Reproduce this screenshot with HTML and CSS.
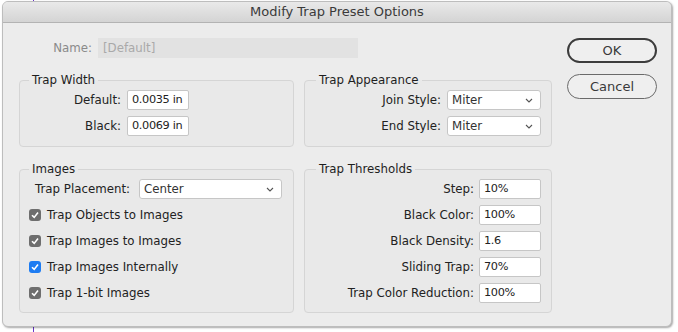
FILE: index.html
```html
<!DOCTYPE html>
<html lang="en">
<head>
    <meta charset="UTF-8">
    <title>Modify Trap Preset Options</title>
    <link rel="stylesheet" href="styles.css">
</head>
<body>
    <div class="dialog">
        <div class="titlebar">Modify Trap Preset Options</div>
        <div class="content">
            <div class="main">
                <div class="name-row">
                    <span class="name-label">Name:</span>
                    <div class="name-field">[Default]</div>
                </div>

                <div class="groups">
                    <fieldset class="group group-top">
                        <legend>Trap Width</legend>
                        <div class="form form-width">
                            <label>Default:</label>
                            <div class="field">0.0035 in</div>
                            <label>Black:</label>
                            <div class="field">0.0069 in</div>
                        </div>
                    </fieldset>

                    <fieldset class="group group-top group-right">
                        <legend>Trap Appearance</legend>
                        <div class="form form-appearance">
                            <label>Join Style:</label>
                            <div class="select">Miter<svg class="chevron" viewBox="0 0 8 5"><path d="M1 1 L4 4 L7 1"/></svg></div>
                            <label>End Style:</label>
                            <div class="select">Miter<svg class="chevron" viewBox="0 0 8 5"><path d="M1 1 L4 4 L7 1"/></svg></div>
                        </div>
                    </fieldset>

                    <fieldset class="group group-bottom">
                        <legend>Images</legend>
                        <div class="images">
                            <div class="placement">
                                <label>Trap Placement:</label>
                                <div class="select">Center<svg class="chevron" viewBox="0 0 8 5"><path d="M1 1 L4 4 L7 1"/></svg></div>
                            </div>
                            <div class="check-row"><span class="checkbox"><svg viewBox="0 0 12 12"><path d="M3 6.2 L5.2 8.4 L9 3.6"/></svg></span>Trap Objects to Images</div>
                            <div class="check-row"><span class="checkbox"><svg viewBox="0 0 12 12"><path d="M3 6.2 L5.2 8.4 L9 3.6"/></svg></span>Trap Images to Images</div>
                            <div class="check-row"><span class="checkbox checkbox-blue"><svg viewBox="0 0 12 12"><path d="M3 6.2 L5.2 8.4 L9 3.6"/></svg></span>Trap Images Internally</div>
                            <div class="check-row"><span class="checkbox"><svg viewBox="0 0 12 12"><path d="M3 6.2 L5.2 8.4 L9 3.6"/></svg></span>Trap 1-bit Images</div>
                        </div>
                    </fieldset>

                    <fieldset class="group group-bottom group-right">
                        <legend>Trap Thresholds</legend>
                        <div class="form form-thresholds">
                            <label>Step:</label>
                            <div class="field">10%</div>
                            <label>Black Color:</label>
                            <div class="field">100%</div>
                            <label>Black Density:</label>
                            <div class="field">1.6</div>
                            <label>Sliding Trap:</label>
                            <div class="field">70%</div>
                            <label>Trap Color Reduction:</label>
                            <div class="field">100%</div>
                        </div>
                    </fieldset>
                </div>
            </div>

            <div class="buttons">
                <button class="btn btn-default">OK</button>
                <button class="btn">Cancel</button>
            </div>
        </div>
    </div>
</body>
</html>
```

FILE: styles.css
```css
body {
    margin: 0;
    padding-top: 1px;
    height: 331px;
    font-family: "DejaVu Sans", sans-serif;
    font-size: 11.8px;
    color: #222;
    background: linear-gradient(to right, transparent 33px, #6b35c9 33px, #6b35c9 34px, transparent 34px), #fff;
}
.dialog {
    box-sizing: border-box;
    width: 670px;
    height: 326px;
    margin-left: 2px;
    background: #ececec;
    border: 1px solid #bdbdbd;
    border-radius: 6px;
    box-shadow: 1px 1px 2px rgba(0, 0, 0, 0.35);
    overflow: hidden;
}
.titlebar {
    height: 20px;
    line-height: 20px;
    text-align: center;
    font-size: 13px;
    color: #3a3a3a;
    background: linear-gradient(#e9e9e9, #d4d4d4);
    border-bottom: 1px solid #b3b3b3;
}
.content {
    display: flex;
    gap: 15px;
    padding-left: 16px;
}
.main {
    width: 533px;
    padding-top: 15px;
}
.name-row {
    display: flex;
    align-items: center;
    gap: 6px;
    height: 20px;
}
.name-label {
    width: 73px;
    text-align: right;
    color: #8a8a8a;
}
.name-field {
    box-sizing: border-box;
    width: 260px;
    height: 20px;
    line-height: 20px;
    padding-left: 5px;
    background: #e2e2e2;
    color: #a9a9a9;
}
.groups {
    display: grid;
    grid-template-columns: 275px 248px;
    grid-template-rows: 75px 152px;
    column-gap: 10px;
    row-gap: 14px;
    margin-top: 14px;
}
.group {
    box-sizing: border-box;
    margin: 0;
    padding: 2px 0 0 0;
    min-width: 0;
    border: 1px solid #d5d5d5;
    border-radius: 4px;
    background: #e9e9e9;
}
.group legend {
    margin-left: 9px;
    padding: 0 3px;
    line-height: 16px;
    color: #1e1e1e;
}
.group-right legend {
    margin-left: 11px;
}
.form {
    display: grid;
    row-gap: 6px;
    column-gap: 6px;
    grid-auto-rows: 20px;
    align-items: center;
}
.form label {
    text-align: right;
    white-space: nowrap;
}
.form-width {
    grid-template-columns: 101px 62px;
}
.form-appearance {
    grid-template-columns: 136px 94px;
}
.form-thresholds {
    grid-template-columns: 169px 62px;
    column-gap: 5px;
}
.field,
.select {
    box-sizing: border-box;
    height: 20px;
    line-height: 18px;
    padding-left: 4px;
    background: #fff;
    border: 1px solid #c6c6c6;
    border-radius: 2px;
    color: #222;
    white-space: nowrap;
    overflow: hidden;
}
.field {
    font-size: 11.3px;
    letter-spacing: -0.35px;
}
.select {
    display: flex;
    justify-content: space-between;
    align-items: center;
    padding-right: 7px;
    border-radius: 3px;
    color: #333;
}
.chevron {
    width: 8px;
    height: 5px;
    fill: none;
    stroke: #555;
    stroke-width: 1.1;
}
.images {
    display: flex;
    flex-direction: column;
    gap: 6px;
    padding-left: 9px;
}
.placement {
    display: grid;
    grid-template-columns: 104px 143px;
    align-items: center;
    height: 20px;
    padding-left: 6px;
}
.check-row {
    display: flex;
    align-items: center;
    gap: 6px;
    height: 20px;
}
.checkbox {
    display: flex;
    width: 12px;
    height: 12px;
    border-radius: 3px;
    background: #6e6e6e;
}
.checkbox-blue {
    background: #1d7cf2;
}
.checkbox svg {
    width: 12px;
    height: 12px;
    fill: none;
    stroke: #fff;
    stroke-width: 1.6;
}
.buttons {
    display: flex;
    flex-direction: column;
    gap: 11px;
    padding-top: 15px;
}
.btn {
    box-sizing: border-box;
    width: 90px;
    height: 25px;
    padding: 0;
    font-family: "DejaVu Sans", sans-serif;
    font-size: 13px;
    color: #3a3a3a;
    background: #efefef;
    border: 1px solid #6a6a6a;
    border-radius: 13px;
}
.btn-default {
    border: 2px solid #3c3c3c;
}
```
